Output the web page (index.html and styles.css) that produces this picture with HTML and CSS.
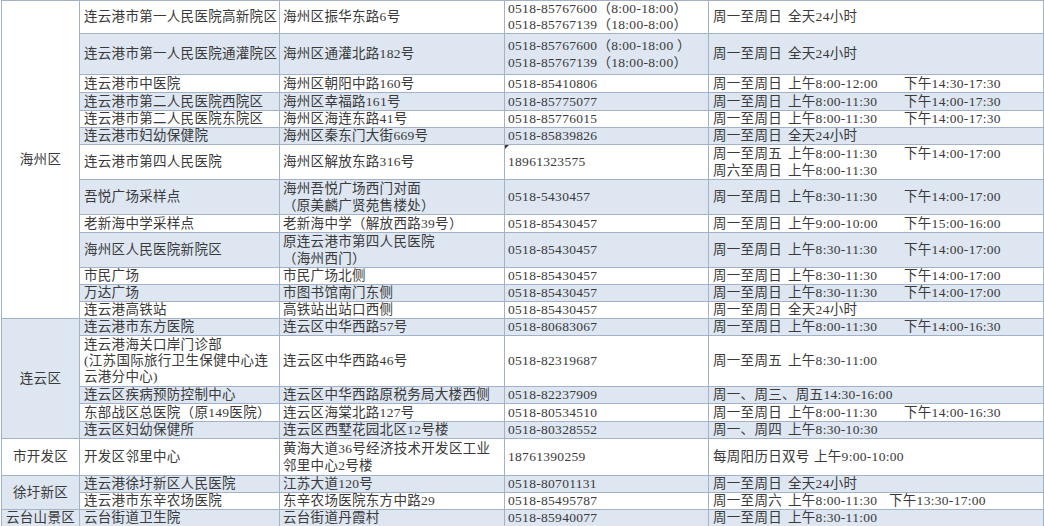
FILE: index.html
```html
<!DOCTYPE html>
<html lang="zh-CN">
<head>
<meta charset="utf-8">
<title>连云港核酸检测点</title>
<link rel="stylesheet" href="styles.css">
</head>
<body>
<table class="sheet">
  <colgroup>
    <col class="c-dist"><col class="c-name"><col class="c-addr"><col class="c-tel"><col class="c-time">
  </colgroup>
  <tbody>
    <tr class="h33">
      <td class="dist" rowspan="13"><div>海州区</div></td>
      <td><div>连云港市第一人民医院高新院区</div></td>
      <td><div>海州区振华东路6号</div></td>
      <td><div>0518-85767600（8:00-18:00）</div><div>0518-85767139（18:00-8:00）</div></td>
      <td><div><span class="wk">周一至周日</span>全天24小时</div></td>
    </tr>
    <tr class="h41 alt">
      <td><div>连云港市第一人民医院通灌院区</div></td>
      <td><div>海州区通灌北路182号</div></td>
      <td><div class="l17">0518-85767600（8:00-18:00 ）</div><div class="l17">0518-85767139（18:00-8:00）</div></td>
      <td><div><span class="wk">周一至周日</span>全天24小时</div></td>
    </tr>
    <tr class="h18">
      <td><div>连云港市中医院</div></td>
      <td><div>海州区朝阳中路160号</div></td>
      <td><div>0518-85410806</div></td>
      <td><div><span class="wk">周一至周日</span><span class="am">上午8:00-12:00</span>下午14:30-17:30</div></td>
    </tr>
    <tr class="h18 alt">
      <td><div>连云港市第二人民医院西院区</div></td>
      <td><div>海州区幸福路161号</div></td>
      <td><div>0518-85775077</div></td>
      <td><div><span class="wk">周一至周日</span><span class="am">上午8:00-11:30</span>下午14:00-17:30</div></td>
    </tr>
    <tr class="h17">
      <td><div>连云港市第二人民医院东院区</div></td>
      <td><div>海州区海连东路41号</div></td>
      <td><div>0518-85776015</div></td>
      <td><div><span class="wk">周一至周日</span><span class="am">上午8:00-11:30</span>下午14:00-17:30</div></td>
    </tr>
    <tr class="h17 alt">
      <td><div>连云港市妇幼保健院</div></td>
      <td><div>海州区秦东门大街669号</div></td>
      <td><div>0518-85839826</div></td>
      <td><div><span class="wk">周一至周日</span>全天24小时</div></td>
    </tr>
    <tr class="h35">
      <td><div>连云港市第四人民医院</div></td>
      <td><div>海州区解放东路316号</div></td>
      <td class="flag"><div>18961323575</div></td>
      <td><div class="l17"><span class="wk">周一至周五</span><span class="am">上午8:00-11:30</span>下午14:00-17:00</div><div class="l17"><span class="wk">周六至周日</span>上午8:00-11:30</div></td>
    </tr>
    <tr class="h34 alt">
      <td><div>吾悦广场采样点</div></td>
      <td><div class="l17">海州吾悦广场西门对面</div><div class="l17">（原美麟广贤苑售楼处）</div></td>
      <td><div>0518-5430457</div></td>
      <td><div><span class="wk">周一至周日</span><span class="am">上午8:30-11:30</span>下午14:00-17:00</div></td>
    </tr>
    <tr class="h18">
      <td><div>老新海中学采样点</div></td>
      <td><div>老新海中学（解放西路39号）</div></td>
      <td><div>0518-85430457</div></td>
      <td><div><span class="wk">周一至周日</span><span class="am">上午9:00-10:00</span>下午15:00-16:00</div></td>
    </tr>
    <tr class="h35 alt">
      <td><div>海州区人民医院新院区</div></td>
      <td><div class="l17">原连云港市第四人民医院</div><div class="l17">（海州西门）</div></td>
      <td><div>0518-85430457</div></td>
      <td><div><span class="wk">周一至周日</span><span class="am">上午8:30-11:30</span>下午14:00-17:00</div></td>
    </tr>
    <tr class="h17">
      <td><div>市民广场</div></td>
      <td><div>市民广场北侧</div></td>
      <td><div>0518-85430457</div></td>
      <td><div><span class="wk">周一至周日</span><span class="am">上午8:30-11:30</span>下午14:00-17:00</div></td>
    </tr>
    <tr class="h17 alt">
      <td><div>万达广场</div></td>
      <td><div>市图书馆南门东侧</div></td>
      <td><div>0518-85430457</div></td>
      <td><div><span class="wk">周一至周日</span><span class="am">上午8:30-11:30</span>下午14:00-17:00</div></td>
    </tr>
    <tr class="h17">
      <td><div>连云港高铁站</div></td>
      <td><div>高铁站出站口西侧</div></td>
      <td><div>0518-85430457</div></td>
      <td><div><span class="wk">周一至周日</span>全天24小时</div></td>
    </tr>
    <tr class="h17 alt">
      <td class="dist" rowspan="5"><div>连云区</div></td>
      <td><div>连云港市东方医院</div></td>
      <td><div>连云区中华西路57号</div></td>
      <td><div>0518-80683067</div></td>
      <td><div><span class="wk">周一至周日</span><span class="am">上午8:00-11:30</span>下午14:00-16:30</div></td>
    </tr>
    <tr class="h51">
      <td><div class="l16">连云港海关口岸门诊部</div><div class="l16">(江苏国际旅行卫生保健中心连</div><div class="l16">云港分中心)</div></td>
      <td><div>连云区中华西路46号</div></td>
      <td><div>0518-82319687</div></td>
      <td><div><span class="wk">周一至周五</span>上午8:30-11:00</div></td>
    </tr>
    <tr class="h17 alt">
      <td><div>连云区疾病预防控制中心</div></td>
      <td><div>连云区中华西路原税务局大楼西侧</div></td>
      <td><div>0518-82237909</div></td>
      <td><div>周一、周三、周五14:30-16:00</div></td>
    </tr>
    <tr class="h18">
      <td><div>东部战区总医院（原149医院）</div></td>
      <td><div>连云区海棠北路127号</div></td>
      <td><div>0518-80534510</div></td>
      <td><div><span class="wk">周一至周日</span><span class="am">上午8:00-11:30</span>下午14:00-16:30</div></td>
    </tr>
    <tr class="h17 alt">
      <td><div>连云区妇幼保健所</div></td>
      <td><div>连云区西墅花园北区12号楼</div></td>
      <td><div>0518-80328552</div></td>
      <td><div><span class="wk">周一、周四</span>上午8:30-10:30</div></td>
    </tr>
    <tr class="h37">
      <td class="dist"><div>市开发区</div></td>
      <td><div>开发区邻里中心</div></td>
      <td><div class="l17">黄海大道36号经济技术开发区工业</div><div class="l17">邻里中心2号楼</div></td>
      <td><div>18761390259</div></td>
      <td><div><span class="wk7">每周阳历日双号</span>上午9:00-10:00</div></td>
    </tr>
    <tr class="h17 alt">
      <td class="dist" rowspan="2"><div>徐圩新区</div></td>
      <td><div>连云港徐圩新区人民医院</div></td>
      <td><div>江苏大道120号</div></td>
      <td><div>0518-80701131</div></td>
      <td><div><span class="wk">周一至周日</span>全天24小时</div></td>
    </tr>
    <tr class="h17">
      <td><div>连云港市东辛农场医院</div></td>
      <td><div>东辛农场医院东方中路29</div></td>
      <td><div>0518-85495787</div></td>
      <td><div><span class="wk">周一至周六</span><span class="am-s">上午8:00-11:30</span>下午13:30-17:00</div></td>
    </tr>
    <tr class="h17 alt">
      <td class="dist"><div>云台山景区</div></td>
      <td><div>云台街道卫生院</div></td>
      <td><div>云台街道丹霞村</div></td>
      <td><div>0518-85940077</div></td>
      <td><div><span class="wk">周一至周日</span>上午8:30-11:00</div></td>
    </tr>
  </tbody>
</table>
</body>
</html>
```

FILE: styles.css
```css
html, body {
  margin: 0;
  padding: 0;
  background: #ffffff;
}

body {
  font-family: "Liberation Serif", "Noto Sans CJK SC", serif;
  font-size: 13.5px;
  letter-spacing: 0.3px;
  color: #3a3a3a;
}

.sheet {
  margin: 0 0 0 1px;
  width: 1042px;
  table-layout: fixed;
  border-collapse: collapse;
}

.c-dist { width: 78px; }
.c-name { width: 200px; }
.c-addr { width: 225px; }
.c-tel  { width: 204px; }
.c-time { width: 335px; }

.sheet td {
  border: 1px solid #a3b2c6;
  padding: 0 0 0 3px;
  vertical-align: middle;
  white-space: nowrap;
  overflow: hidden;
  background: #ffffff;
}

.sheet td > div {
  height: 16px;
  line-height: 16px;
  overflow: visible;
}

.sheet td > div.l17 {
  height: 17px;
  line-height: 17px;
}

.sheet td:nth-last-child(4),
.sheet td:last-child {
  padding-left: 4px;
}

.sheet tr.alt td {
  background: #dde6f1;
}

.sheet td.dist {
  text-align: center;
  padding: 0;
}

.h17 { height: 17px; }
.h18 { height: 18px; }
.h33 { height: 33px; }
.h34 { height: 34px; }
.h35 { height: 35px; }
.h37 { height: 37px; }
.h41 { height: 41px; }
.h51 { height: 51px; }

.wk {
  display: inline-block;
  width: 75px;
}

.wk7 {
  display: inline-block;
  width: 101px;
}

.am {
  display: inline-block;
  width: 116px;
}

.am-s {
  display: inline-block;
  width: 101px;
}

.flag {
  position: relative;
}

.flag::before {
  content: "";
  position: absolute;
  left: 0;
  top: 0;
  width: 0;
  height: 0;
  border-top: 4px solid #3a3a3a;
  border-right: 4px solid transparent;
}
```
